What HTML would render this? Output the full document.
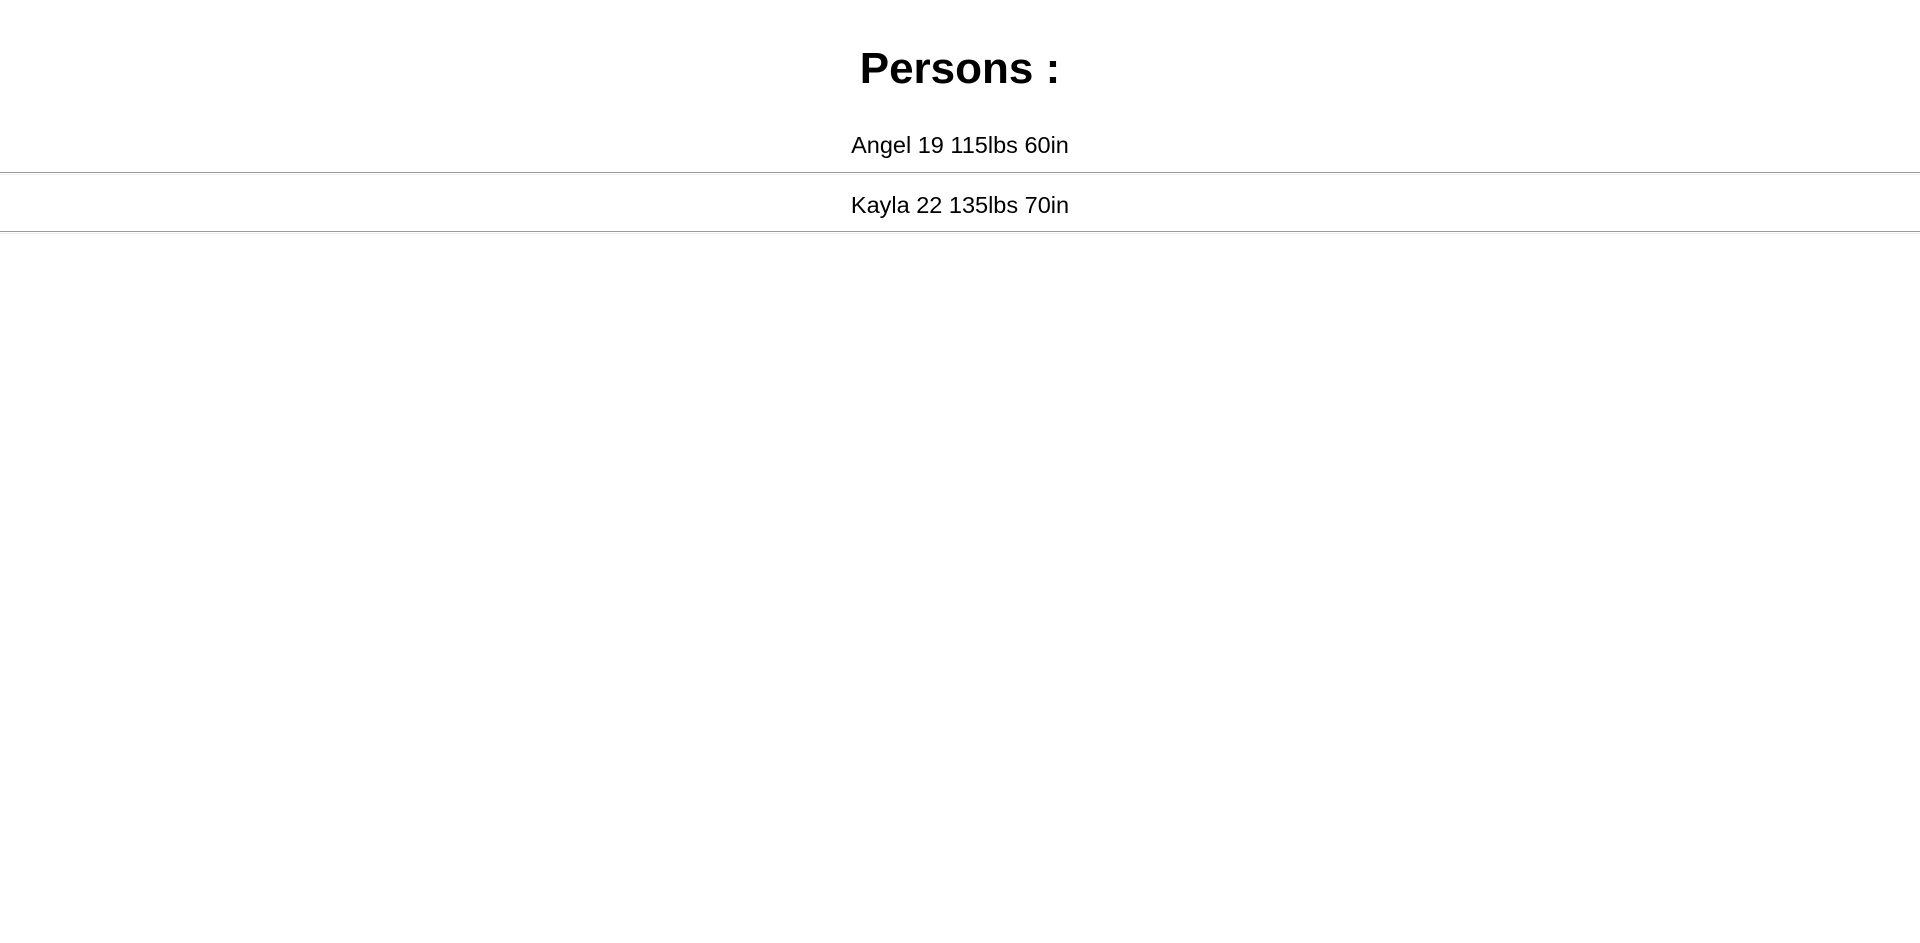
<!DOCTYPE html>
<html><head><meta charset="utf-8"><style>
html,body{margin:0;padding:0;background:#fff;width:1920px;height:943px;overflow:hidden;font-family:"Liberation Sans",sans-serif;color:#000}
.t{position:absolute;left:0;width:1920px;text-align:center;line-height:1}
h1{position:absolute;left:0;width:1920px;margin:0;text-align:center;font-size:44px;font-weight:bold;line-height:1;top:47px}
.hr{position:absolute;left:0;width:1920px;height:1px;border-top:1px solid #9a9a9a;border-bottom:1px solid #eee}
</style></head><body>
<h1>Persons :</h1>
<div class="t" style="top:134px;font-size:23.5px">Angel 19 115lbs 60in</div>
<div class="hr" style="top:172px"></div>
<div class="t" style="top:194px;font-size:23.5px">Kayla 22 135lbs 70in</div>
<div class="hr" style="top:231px"></div>
</body></html>
